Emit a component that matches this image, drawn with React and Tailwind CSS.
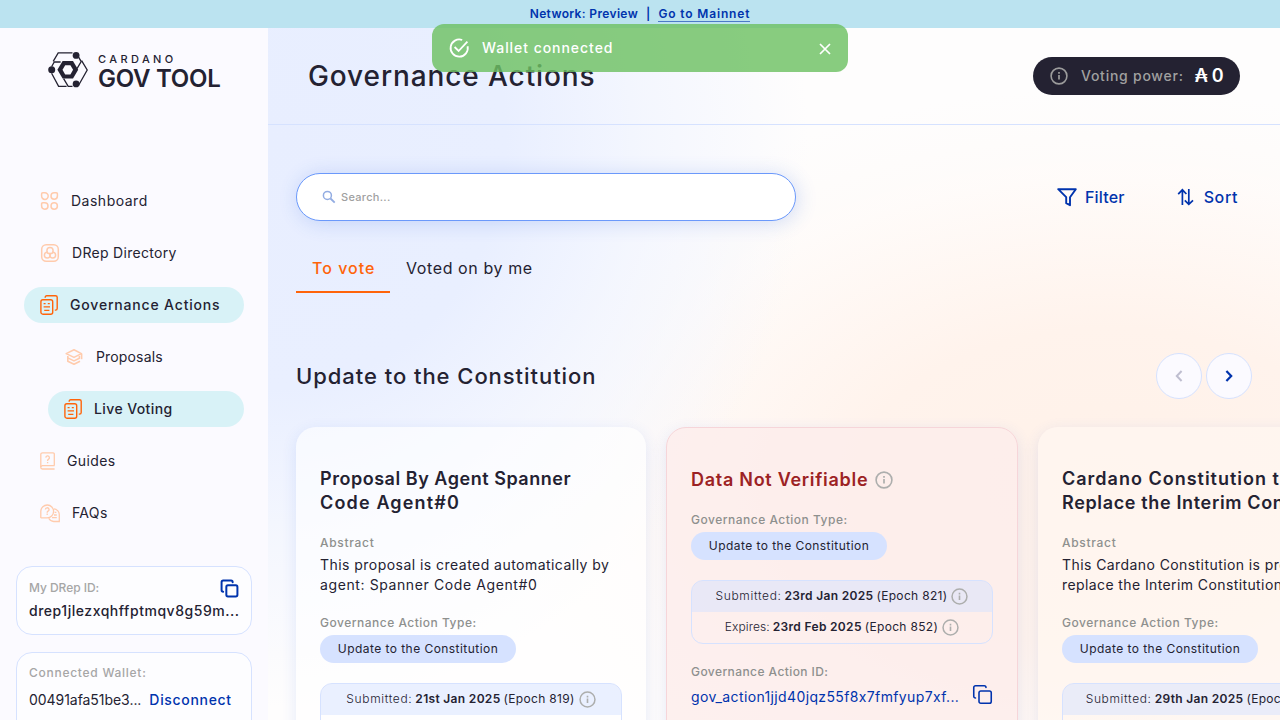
import { Copy } from "lucide-react";

function InfoIcon({ className = "", size = 18 }) {
  return (
    <svg width={size} height={size} viewBox="0 0 18 18" fill="none" stroke="currentColor" className={"shrink-0 " + className}>
      <circle cx="9" cy="9" r="7.9" strokeWidth="1.6" />
      <path d="M9 8v4.6" strokeWidth="1.7" />
      <path d="M9 5.1v1.7" strokeWidth="1.7" />
    </svg>
  );
}

function Logo() {
  return (
    <svg width="40" height="36" viewBox="0 0 40 36" fill="none" stroke="#242232" strokeWidth="1.3" className="shrink-0">
      <path d="M24.5 .9H10.2L5.2 9.4" />
      <path d="M12.6 10H6.3L3.7 14.5" />
      <path d="M3.6 21.2 10.6 34.4H18.6" />
      <path d="M15.6 26.6l4.6 7.8h4.3" />
      <path d="M33.6 8.6 39.2 18 30.6 33.2" />
      <path d="M29 16.6l4.2-7-2.6-4.4" />
      <path d="M14.6 9h10.4l5.2 8.8-5.2 8.8H14.6L9.4 17.8z" fill="#242232" stroke="none" />
      <path d="M17.2 13.2h5.2l2.7 4.6-2.7 4.6h-5.2l-2.7-4.6z" fill="#fbfaff" stroke="none" />
      <g fill="#242232" stroke="none">
        <circle cx="28.1" cy="3.4" r="3.4" />
        <circle cx="3.7" cy="17.7" r="3.5" />
        <circle cx="28.1" cy="31.9" r="3.4" />
      </g>
    </svg>
  );
}

function DashboardIcon() {
  return (
    <svg width="19" height="20" viewBox="0 0 19 20" fill="none" stroke="#ffcbad" strokeWidth="1.5" className="shrink-0">
      <path d="M4.8 1.8A3.3 3.3 0 1 1 1.6 5V2.9a1.1 1.1 0 0 1 1.1-1.1z" />
      <path d="M14.2 1.8h2.1a1.1 1.1 0 0 1 1.1 1.1V5a3.2 3.2 0 1 1-3.2-3.2z" />
      <path d="M4.8 11.8a3.2 3.2 0 1 1-3.2 3.3v-2.2a1.1 1.1 0 0 1 1.1-1.1z" />
      <circle cx="14.2" cy="15" r="3.2" />
    </svg>
  );
}

function DRepIcon() {
  return (
    <svg width="20" height="20" viewBox="0 0 20 20" fill="none" stroke="#ffcbad" strokeWidth="1.5" className="shrink-0">
      <rect x="1.7" y="1.7" width="16.6" height="16.6" rx="4.5" />
      <circle cx="10" cy="7.7" r="3.1" />
      <path d="M7.3 9.2a2.9 2.9 0 1 0 2.9 3.1c0-1.3-1-2.2-1-2.2" />
      <path d="M12.7 9.2a2.9 2.9 0 1 1-2.9 3.1c0-1.3 1-2.2 1-2.2" />
    </svg>
  );
}

function ActionsIcon() {
  return (
    <svg width="18" height="20" viewBox="0 0 18 20" fill="none" stroke="#ff640a" strokeWidth="1.4" className="shrink-0">
      <rect x=".9" y="4.7" width="11.8" height="14.5" rx="2" />
      <path d="M5.2 2.7V2.3C5.2 1.4 5.8.7 6.7.7h8.8c.9 0 1.7.7 1.7 1.6v11.2c0 .9-.8 1.6-1.7 1.6h-.7" />
      <path d="M3.6 8.6h2M7.8 8.6h2M3.6 11.9h6.4M4.2 15.4h5.2" />
    </svg>
  );
}

function ProposalsIcon() {
  return (
    <svg width="18" height="18" viewBox="0 0 18 18" fill="none" stroke="#ffcbad" strokeWidth="1.6" strokeLinejoin="round" className="shrink-0">
      <path d="M9 1.8 16.4 5.6 9 9.4 1.2 5.6z" />
      <path d="M16.6 5.8v5.4" />
      <path d="M2.8 8v5.2L9 16.3l6-3" />
      <path d="M2.8 9.9 9 12.9l5.4-2.6V8" />
    </svg>
  );
}

function GuidesIcon() {
  return (
    <svg width="15" height="18" viewBox="0 0 15 18" fill="none" stroke="#ffcbad" strokeWidth="1.3" className="shrink-0">
      <path d="M14.3 13.6V2a1.2 1.2 0 0 0-1.2-1.2H2.5A1.7 1.7 0 0 0 .8 2.5v12.6" />
      <path d="M14.6 13.7H2.4a1.6 1.6 0 0 0 0 3.3h12.2" />
      <path d="M5.8 5.6a1.8 1.8 0 1 1 2.6 1.7c-.6.3-.8.6-.8 1.2v.4M7.6 10v1.3" />
    </svg>
  );
}

function FaqIcon() {
  return (
    <svg width="20" height="19" viewBox="0 0 20 19" fill="none" stroke="#ffcbad" strokeWidth="1.3" className="shrink-0">
      <path d="M.8 14V7.1A6.4 6.4 0 1 1 7.2 13.8H.8z" />
      <path d="M14 4.9a5.9 5.9 0 0 1 5.3 6.2v6.4h-5.6a6 6 0 0 1-5-3.2" />
      <path d="M5.4 5.6a1.8 1.8 0 1 1 2.6 1.6c-.6.3-.8.6-.8 1.2v.3M7.2 9.6v1.3M14.6 8.4h1.8M14 11h2.8M12 13.7h4.8" />
    </svg>
  );
}

function NavItem({ icon, label, active, sub, text = "" }) {
  const pill = active ? "bg-[#d8f2f7] font-medium" : "";
  const inset = sub && !active ? "gap-3 pl-[17px]" : "gap-3 pl-4";
  return (
    <div className={`flex h-9 items-center rounded-full ${inset} ${pill} ${sub ? "ml-6" : ""}`}>
      {icon}
      <span className={`text-sm whitespace-nowrap ${text}`}>{label}</span>
    </div>
  );
}

function Label({ children, className = "" }) {
  return <div className={`text-xs leading-4 font-medium whitespace-nowrap text-[#8e908e] ${className}`}>{children}</div>;
}

function TypeChip() {
  return (
    <div className="flex h-7 w-[196px] items-center justify-center rounded-full bg-[#d6e2ff] text-xs tracking-[0.45px] whitespace-nowrap">
      Update to the Constitution
    </div>
  );
}

function DateRow({ kind, date, epoch, shaded, kindTrack = "tracking-[0.65px]" }) {
  return (
    <div className={`flex h-[31px] items-center justify-center gap-1 text-xs whitespace-nowrap ${shaded ? "bg-[#d6e2ff]/50" : ""}`}>
      <span className="flex gap-[3px] pb-0.5">
        <span className={`font-light ${kindTrack}`}>{kind}</span>
        <span className="font-semibold tracking-[0.32px]">{date}</span>
        <span className="tracking-[0.32px]">{epoch}</span>
      </span>
      <InfoIcon size={17} className="text-[#adaead]" />
    </div>
  );
}

function ProposalCard({ title, abstract, submitted, epoch }) {
  return (
    <article className="h-[560px] w-[350px] shrink-0 rounded-[20px] bg-white/60 px-6 pt-10 shadow-[0_4px_15px_0_rgba(47,98,220,0.12)] last:bg-[#fff6f1]/70">
      <h3 className="text-lg leading-6 font-semibold whitespace-nowrap">{title}</h3>
      <Label className="mt-5 tracking-[0.7px]">Abstract</Label>
      <p className="mt-1 text-sm leading-5 whitespace-nowrap">{abstract}</p>
      <Label className="mt-5 tracking-[0.5px]">Governance Action Type:</Label>
      <div className="mt-1">
        <TypeChip />
      </div>
      <div className="mt-5 h-16 w-[302px] overflow-hidden rounded-xl border border-[#d6e2ff]">
        <DateRow kind="Submitted:" date={submitted} epoch={epoch} shaded />
      </div>
    </article>
  );
}

function UnverifiedCard() {
  return (
    <article className="h-[560px] w-[352px] shrink-0 rounded-[20px] border border-[#f6d5d9] bg-[#fdeceb]/80 px-6 pt-10 shadow-[0_4px_15px_0_rgba(47,98,220,0.12)]">
      <div className="flex h-6 items-center gap-[7px]">
        <h3 className="text-lg leading-6 font-semibold tracking-[0.72px] whitespace-nowrap text-[#9c2224]">Data Not Verifiable</h3>
        <InfoIcon size={18} className="text-[#adaead]" />
      </div>
      <Label className="mt-5 tracking-[0.5px]">Governance Action Type:</Label>
      <div className="mt-1">
        <TypeChip />
      </div>
      <div className="mt-5 w-[302px] overflow-hidden rounded-xl border border-[#d6e2ff]">
        <DateRow kind="Submitted:" date="23rd Jan 2025" epoch="(Epoch 821)" shaded />
        <DateRow kind="Expires:" date="23rd Feb 2025" epoch="(Epoch 852)" kindTrack="tracking-[0.1px]" />
      </div>
      <Label className="mt-5 tracking-[0.42px]">Governance Action ID:</Label>
      <div className="mt-[3px] flex w-[302px] items-start justify-between text-[#0033ad]">
        <span className="pt-1 text-sm leading-5 tracking-[0.37px] whitespace-nowrap">gov_action1jjd40jqz55f8x7fmfyup7xf...</span>
        <Copy size={21} strokeWidth={1.8} className="mt-px" />
      </div>
    </article>
  );
}

function Sidebar() {
  return (
    <aside className="flex w-[268px] shrink-0 flex-col bg-[#fbfaff] pt-6">
      <div className="flex h-9 items-start gap-2.5 pl-12">
        <Logo />
        <div className="text-[#242232]">
          <div className="pt-px text-[11px] leading-[13px] font-medium tracking-[3.4px]">CARDANO</div>
          <div className="mt-px text-2xl leading-6 font-semibold tracking-[-0.25px] whitespace-nowrap">GOV TOOL</div>
        </div>
      </div>
      <nav className="mt-[95px] flex flex-col gap-4 px-6">
        <NavItem icon={<DashboardIcon />} label="Dashboard" text="tracking-[0.5px]" />
        <NavItem icon={<DRepIcon />} label="DRep Directory" text="tracking-[0.3px]" />
        <NavItem icon={<ActionsIcon />} label="Governance Actions" active text="tracking-[0.82px]" />
        <NavItem icon={<ProposalsIcon />} label="Proposals" sub text="tracking-[0.15px] pl-px" />
        <NavItem icon={<ActionsIcon />} label="Live Voting" active sub text="tracking-[0.4px]" />
        <NavItem icon={<GuidesIcon />} label="Guides" text="tracking-[0.4px]" />
        <NavItem icon={<FaqIcon />} label="FAQs" text="tracking-[0.35px]" />
      </nav>
      <div className="mx-4 mt-[35px] h-[69px] shrink-0 rounded-2xl border border-[#d6e2ff] bg-[#fdfdff] px-3 pt-[11px]">
        <div className="flex h-5 items-center justify-between">
          <span className="text-xs font-medium tracking-[-0.05px] text-[#a6a6a6]">My DRep ID:</span>
          <Copy size={19} strokeWidth={2.5} className="text-[#0033ad]" />
        </div>
        <div className="mt-[3px] text-sm leading-5 font-medium tracking-[0.53px] whitespace-nowrap">drep1jlezxqhffptmqv8g59m...</div>
      </div>
      <div className="mx-4 mt-[17px] h-24 shrink-0 rounded-2xl border border-[#d6e2ff] bg-[#fdfdff] px-3 pt-3">
        <div className="text-xs font-medium tracking-[0.73px] text-[#a6a6a6]">Connected Wallet:</div>
        <div className="mt-[9px] flex items-center gap-2 text-sm leading-5 whitespace-nowrap">
          <span className="tracking-[-0.05px]">00491afa51be3...</span>
          <span className="font-medium tracking-[0.68px] text-[#0033ad]">Disconnect</span>
        </div>
      </div>
    </aside>
  );
}

export default function App() {
  return (
    <div className="relative flex h-[720px] w-[1280px] flex-col overflow-hidden bg-white font-['Inter',sans-serif] text-[#242232]">
      <div className="flex h-7 shrink-0 items-center justify-center bg-[#bbe3f0] text-xs font-semibold whitespace-nowrap text-[#0033ad]">
        <span className="tracking-[0.35px]">Network: Preview</span>
        <span className="mx-2">|</span>
        <span className="border-b border-[#0033ad]/60 leading-[14px] tracking-[0.85px]">Go to Mainnet</span>
      </div>

      <div className="flex min-h-0 flex-1">
        <Sidebar />
        <main className="flex min-w-0 flex-1 flex-col overflow-hidden bg-[radial-gradient(ellipse_540px_570px_at_0px_110px,#e8eeff_0%,#e9efff_44%,rgba(240,244,255,0.7)_70%,rgba(255,255,255,0)_100%),radial-gradient(ellipse_640px_400px_at_840px_460px,#fff1e8_0%,#fff3ec_40%,rgba(255,250,247,0.6)_78%,rgba(255,255,255,0)_100%)] bg-[#fefdfd]">
          <header className="flex h-[97px] shrink-0 items-center justify-between border-b border-[#d6e2ff] pr-10 pl-10">
            <h1 className="text-[28px] leading-9 font-medium tracking-[0.9px] whitespace-nowrap">Governance Actions</h1>
            <div className="flex h-[38px] w-[207px] items-center rounded-full bg-[#242232] pl-[17px] text-white">
              <InfoIcon className="text-[#9c9c9c]" />
              <span className="ml-[13px] text-sm font-medium tracking-[0.75px] whitespace-nowrap text-[#a0a0a0]">Voting power:</span>
              <span className="ml-[11px] text-lg font-semibold tracking-[-0.3px] whitespace-nowrap">₳ 0</span>
            </div>
          </header>

          <div className="mt-12 flex shrink-0 items-center justify-between pr-[42px] pl-7">
            <div className="flex h-12 w-[500px] items-center rounded-full border border-[#6b99fb] bg-white pl-[25px] shadow-[2px_2px_20px_0_rgba(47,98,220,0.2)]">
              <svg width="14" height="14" viewBox="0 0 14 14" fill="none" stroke="#92ace2" strokeWidth="1.5">
                <circle cx="5.4" cy="5.4" r="4" />
                <path d="m8.5 8.5 4.2 4.2" strokeWidth="1.8" />
              </svg>
              <span className="ml-[5px] text-[11px] font-medium tracking-[0.3px] text-[#a0a0a0]">Search...</span>
            </div>
            <div className="flex items-center text-base font-medium text-[#0033ad]">
              <svg width="20" height="20" viewBox="0 0 20 20" fill="none" stroke="currentColor" strokeWidth="1.9" strokeLinejoin="round">
                <path d="M1.2 2.2h17.6l-5.8 8v8l-3.8-2v-6z" />
              </svg>
              <span className="ml-2 tracking-[0.2px]">Filter</span>
              <svg width="18" height="18" viewBox="0 0 18 18" fill="none" stroke="currentColor" strokeWidth="1.7" className="ml-[52px]">
                <path d="M5.4 17V2M1.2 6.2l4.2-4.4 4 4.2M11.8 1v15.4M7.8 12.4l4 4 4.2-4" />
              </svg>
              <span className="ml-[9px] tracking-[0.6px]">Sort</span>
            </div>
          </div>

          <div className="mt-6 flex h-12 shrink-0 pl-7 text-base leading-6">
            <div className="w-[94px] border-b-2 border-[#ff640a] pt-[11px] pl-4 font-medium tracking-[1px] whitespace-nowrap text-[#ff640a]">To vote</div>
            <div className="pt-[11px] pl-4 tracking-[0.6px] whitespace-nowrap">Voted on by me</div>
          </div>

          <div className="mt-[60px] flex h-[46px] shrink-0 items-center justify-between pr-7 pl-7">
            <h2 className="text-[22px] font-[450] tracking-[0.95px] whitespace-nowrap">Update to the Constitution</h2>
            <div className="flex gap-1">
              <div className="flex size-[46px] items-center justify-center rounded-full border border-[#d6e2ff] bg-[#fbfaff]">
                <svg width="10" height="14" viewBox="0 0 10 14" fill="none" stroke="#bfbed0" strokeWidth="2">
                  <path d="M7.6 2 2.8 7l4.8 5" />
                </svg>
              </div>
              <div className="flex size-[46px] items-center justify-center rounded-full border border-[#d6e2ff] bg-[#fbfaff]">
                <svg width="10" height="14" viewBox="0 0 10 14" fill="none" stroke="#0033ad" strokeWidth="2.2">
                  <path d="m2.4 2 4.8 5-4.8 5" />
                </svg>
              </div>
            </div>
          </div>

          <div className="mt-7 flex shrink-0 gap-5 pl-7">
            <ProposalCard
              title={
                <>
                  <span className="block tracking-[0.53px]">Proposal By Agent Spanner</span>
                  <span className="block tracking-[1.15px]">Code Agent#0</span>
                </>
              }
              abstract={
                <>
                  <span className="block tracking-[0.46px]">This proposal is created automatically by</span>
                  <span className="block tracking-[0.6px]">agent: Spanner Code Agent#0</span>
                </>
              }
              submitted="21st Jan 2025"
              epoch="(Epoch 819)"
            />
            <UnverifiedCard />
            <ProposalCard
              title={
                <>
                  <span className="block tracking-[1px]">Cardano Constitution to</span>
                  <span className="block tracking-[0.65px]">Replace the Interim Constitution</span>
                </>
              }
              abstract={
                <>
                  <span className="block tracking-[0.42px]">This Cardano Constitution is proposed to</span>
                  <span className="block tracking-[0.4px]">replace the Interim Constitution</span>
                </>
              }
              submitted="29th Jan 2025"
              epoch="(Epoch 827)"
            />
          </div>
        </main>
      </div>

      <div className="absolute top-6 left-[432px] flex h-12 w-[416px] items-center rounded-xl bg-[#6ec163]/82 pr-4 pl-4 text-white">
        <svg width="22" height="22" viewBox="0 0 22 22" fill="none" stroke="currentColor" strokeWidth="1.8">
          <path d="M19.6 9.2a8.6 8.6 0 1 1-5.4-6.2" />
          <path d="m6.6 10 4 4L19.4 4.6" />
        </svg>
        <span className="ml-3 text-sm font-medium tracking-[0.95px] whitespace-nowrap">Wallet connected</span>
        <svg width="14" height="14" viewBox="0 0 14 14" fill="none" stroke="currentColor" strokeWidth="1.7" className="mt-0.5 ml-auto">
          <path d="m2 2 10 10M12 2 2 12" />
        </svg>
      </div>
    </div>
  );
}
